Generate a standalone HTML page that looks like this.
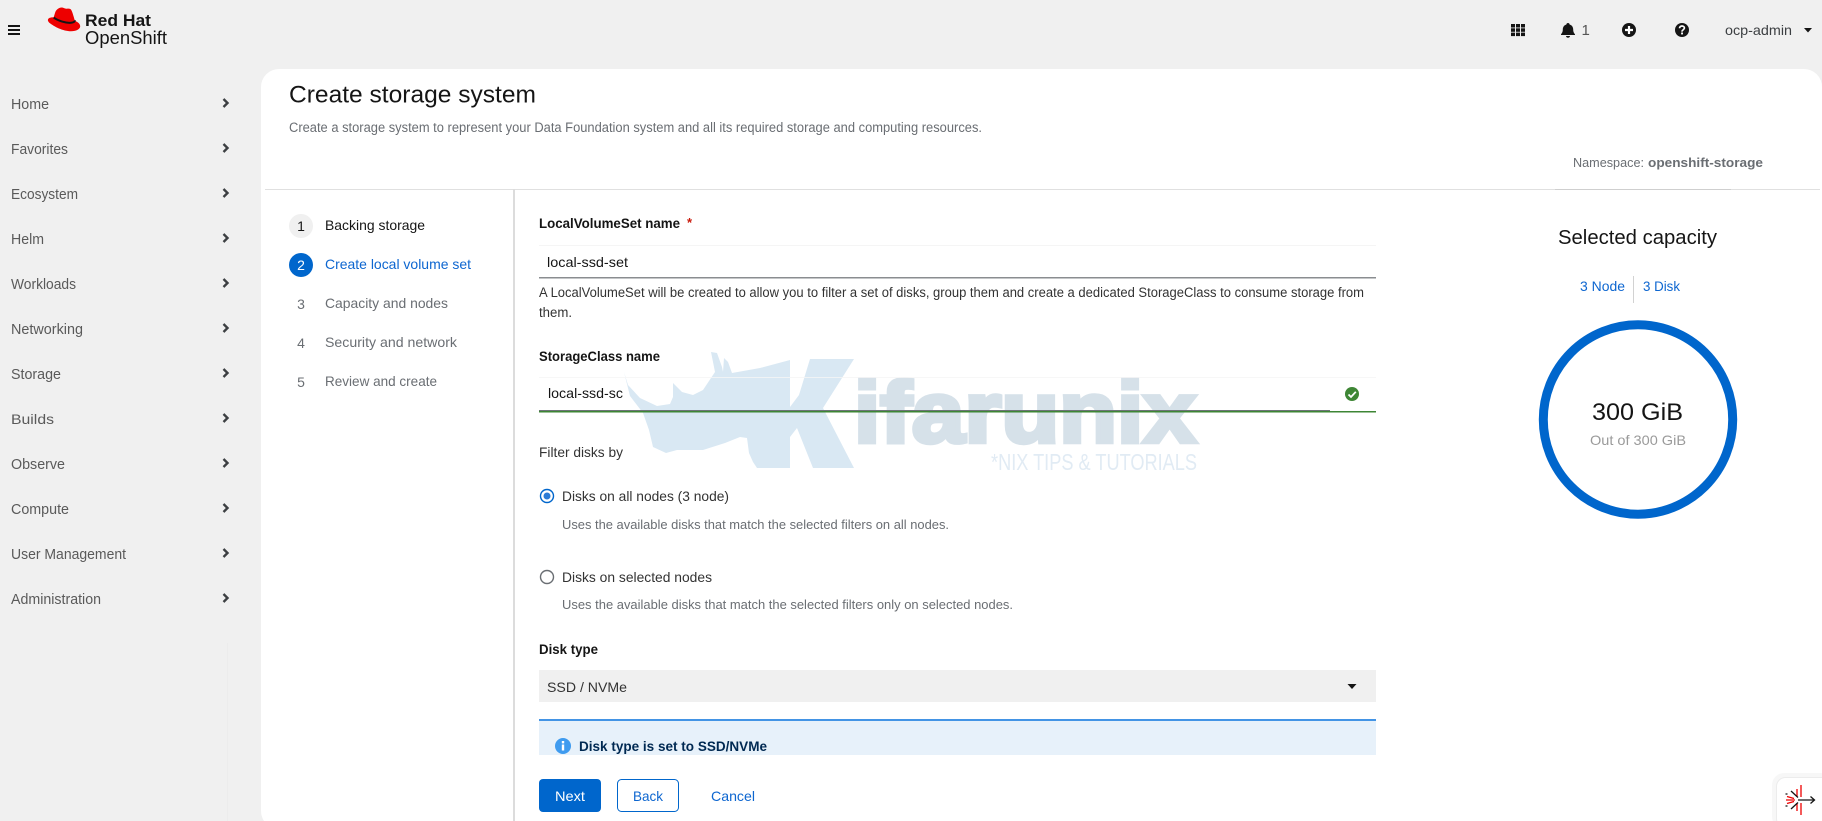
<!DOCTYPE html>
<html lang="en">
<head>
<meta charset="utf-8">
<title>Create storage system</title>
<style>
html,body{margin:0;padding:0;width:1822px;height:821px;overflow:hidden;background:#f0f0f0}
svg{display:block}
text{font-family:"Liberation Sans",sans-serif;font-size:14px;fill:#151515}
.nav text{fill:#5a5a5a;font-size:14.5px}
.mut{fill:#6a6e73}
.b{font-weight:700}
.lnk{fill:#0d66d0}
</style>
</head>
<body>
<svg width="1822" height="821" viewBox="0 0 1822 821" xmlns="http://www.w3.org/2000/svg">
<rect width="1822" height="821" fill="#f0f0f0"/>
<rect x="227" y="643" width="1" height="178" fill="#ececec"/>

<!-- Main panel -->
<rect x="261" y="69" width="1561" height="760" rx="18" fill="#fff"/>

<!-- Masthead -->
<g fill="#151515"><rect x="8" y="25" width="12" height="2"/><rect x="8" y="29" width="12" height="2"/><rect x="8" y="33" width="12" height="2"/></g>
<g>
<path d="M55 13C56 9.500 59 7.500 61.500 7.500C63.500 7.500 64.500 8.700 66.500 8.700C68.500 8.700 70.500 8.200 71.500 10.500C72.800 13 74 18 75 21C78 22 80.200 24 80.200 26.300C80.200 29.300 76 31.300 71 31.300C63 31.300 54 26.500 50 23.300C48 21.700 47.500 20.200 48.200 19C49 17.600 52 17.300 53.700 17.300Z" fill="#ee0000"/>
<path d="M53.700 17.600C58 20.800 66 23.300 71 22.800C73.500 22.500 75 21.700 74.800 20.300" fill="none" stroke="#151515" stroke-width="2"/>
</g>
<text x="85" y="26" class="b" textLength="66" lengthAdjust="spacingAndGlyphs" style="font-size:17px">Red Hat</text>
<text x="85" y="44" textLength="82" lengthAdjust="spacingAndGlyphs" style="font-size:18.500px">OpenShift</text>

<g fill="#151515">
<rect x="1511" y="24" width="4" height="3.500"/><rect x="1516" y="24" width="4" height="3.500"/><rect x="1521" y="24" width="4" height="3.500"/>
<rect x="1511" y="28.300" width="4" height="3.500"/><rect x="1516" y="28.300" width="4" height="3.500"/><rect x="1521" y="28.300" width="4" height="3.500"/>
<rect x="1511" y="32.600" width="4" height="3.500"/><rect x="1516" y="32.600" width="4" height="3.500"/><rect x="1521" y="32.600" width="4" height="3.500"/>
<path d="M1568 23C1569 23 1569.600 23.700 1569.600 24.500C1572 25.200 1573.200 27.200 1573.200 29.500C1573.200 32 1574 33 1575 34.300V35H1561V34.300C1562 33 1562.800 32 1562.800 29.500C1562.800 27.200 1564 25.200 1566.400 24.500C1566.400 23.700 1567 23 1568 23ZM1566 36H1570C1570 37 1569 37.800 1568 37.800C1567 37.800 1566 37 1566 36Z"/>
</g>
<text x="1581.500" y="35" style="font-size:15px;fill:#555">1</text>
<circle cx="1629" cy="30" r="7" fill="#151515"/>
<path d="M1629 26V34M1625 30H1633" stroke="#fff" stroke-width="2.200" fill="none"/>
<circle cx="1682" cy="30" r="7" fill="#151515"/>
<path d="M1679.600 28.200C1679.600 26.800 1680.700 26 1682 26C1683.400 26 1684.400 26.900 1684.400 28C1684.400 29.700 1682 29.800 1682 31.600" stroke="#fff" stroke-width="1.700" fill="none"/>
<rect x="1681.100" y="32.500" width="1.900" height="1.900" fill="#fff"/>
<text x="1725" y="35" textLength="67" lengthAdjust="spacingAndGlyphs" style="fill:#3c3f42">ocp-admin</text>
<path d="M1804 28H1812L1808 32.500Z" fill="#151515"/>

<!-- Sidebar -->
<g class="nav">
<text x="11" y="109" textLength="38" lengthAdjust="spacingAndGlyphs">Home</text>
<text x="11" y="154" textLength="57" lengthAdjust="spacingAndGlyphs">Favorites</text>
<text x="11" y="199" textLength="67" lengthAdjust="spacingAndGlyphs">Ecosystem</text>
<text x="11" y="244" textLength="33" lengthAdjust="spacingAndGlyphs">Helm</text>
<text x="11" y="289" textLength="65" lengthAdjust="spacingAndGlyphs">Workloads</text>
<text x="11" y="334" textLength="72" lengthAdjust="spacingAndGlyphs">Networking</text>
<text x="11" y="379" textLength="50" lengthAdjust="spacingAndGlyphs">Storage</text>
<text x="11" y="424" textLength="43" lengthAdjust="spacingAndGlyphs" style="font-size:14px">Builds</text>
<text x="11" y="469" textLength="54" lengthAdjust="spacingAndGlyphs">Observe</text>
<text x="11" y="514" textLength="58" lengthAdjust="spacingAndGlyphs">Compute</text>
<text x="11" y="559" textLength="115" lengthAdjust="spacingAndGlyphs">User Management</text>
<text x="11" y="604" textLength="90" lengthAdjust="spacingAndGlyphs">Administration</text>
</g>
<g fill="none" stroke="#3c3f42" stroke-width="2.400">
<path d="M223.500 99L227.500 103L223.500 107"/>
<path d="M223.500 144L227.500 148L223.500 152"/>
<path d="M223.500 189L227.500 193L223.500 197"/>
<path d="M223.500 234L227.500 238L223.500 242"/>
<path d="M223.500 279L227.500 283L223.500 287"/>
<path d="M223.500 324L227.500 328L223.500 332"/>
<path d="M223.500 369L227.500 373L223.500 377"/>
<path d="M223.500 414L227.500 418L223.500 422"/>
<path d="M223.500 459L227.500 463L223.500 467"/>
<path d="M223.500 504L227.500 508L223.500 512"/>
<path d="M223.500 549L227.500 553L223.500 557"/>
<path d="M223.500 594L227.500 598L223.500 602"/>
</g>

<!-- Watermark -->
<path d="M624 372L628 385L640 398L657 406L670 404L673 397L673 383L682 392L693 395L703 390L713 375L715 372L711 352L717 353L722 367L723 372L724 358L728 362L732 373L760 368L790 360L790 407L799 395L810 359L854 359L823 408L854 468L813 468L797 428L790 437L790 468L757 468L753 462L749 453L747 438L740 437L725 443L703 450L677 450L666 453L653 447L649 430L643 413L630 396Z" fill="#d9e8f3"/>
<text x="854" y="442" textLength="342" lengthAdjust="spacingAndGlyphs" class="b" style="font-size:86px;fill:#d6e1e9;stroke:#d6e1e9;stroke-width:4.500px">ifarunix</text>
<text x="991" y="470" textLength="206" lengthAdjust="spacingAndGlyphs" style="font-size:23px;fill:#e1ebf4">*NIX TIPS &amp; TUTORIALS</text>

<!-- Page header -->
<text x="289" y="102.500" textLength="247" lengthAdjust="spacingAndGlyphs" style="font-size:24px">Create storage system</text>
<text x="289" y="132" textLength="693" lengthAdjust="spacingAndGlyphs" class="mut" style="font-size:13.500px">Create a storage system to represent your Data Foundation system and all its required storage and computing resources.</text>
<text x="1573" y="167" textLength="71" lengthAdjust="spacingAndGlyphs" class="mut" style="font-size:13px">Namespace:</text>
<text x="1648" y="167" textLength="115" lengthAdjust="spacingAndGlyphs" class="mut b" style="font-size:13px">openshift-storage</text>
<rect x="265" y="189" width="1555" height="1" fill="#e0e0e0"/>
<rect x="1555" y="189" width="176" height="1" fill="#cfcfcf"/>
<rect x="513" y="189" width="2" height="632" fill="#dcdcdc"/>

<!-- Wizard steps -->
<circle cx="301" cy="226" r="12" fill="#f0f0f0"/>
<text x="301" y="231" text-anchor="middle" style="font-size:14px">1</text>
<text x="325" y="230" textLength="100" lengthAdjust="spacingAndGlyphs">Backing storage</text>
<circle cx="301" cy="265" r="12" fill="#0066cc"/>
<text x="301" y="270" text-anchor="middle" style="font-size:14px;fill:#fff">2</text>
<text x="325" y="269" textLength="146" lengthAdjust="spacingAndGlyphs" class="lnk">Create local volume set</text>
<text x="301" y="309" text-anchor="middle" class="mut">3</text>
<text x="325" y="308" textLength="123" lengthAdjust="spacingAndGlyphs" class="mut">Capacity and nodes</text>
<text x="301" y="348" text-anchor="middle" class="mut">4</text>
<text x="325" y="347" textLength="132" lengthAdjust="spacingAndGlyphs" class="mut">Security and network</text>
<text x="301" y="387" text-anchor="middle" class="mut">5</text>
<text x="325" y="386" textLength="112" lengthAdjust="spacingAndGlyphs" class="mut">Review and create</text>

<!-- Form -->
<text x="539" y="228" textLength="141" lengthAdjust="spacingAndGlyphs" class="b" style="font-size:13.500px">LocalVolumeSet name</text>
<text x="687" y="227" class="b" style="font-size:13px;fill:#c9190b">*</text>
<rect x="539" y="245" width="837" height="1" fill="#f5f5f5"/>
<text x="547" y="267" textLength="81" lengthAdjust="spacingAndGlyphs">local-ssd-set</text>
<rect x="539" y="277" width="837" height="1.500" fill="#8a8d90"/>
<text x="539" y="297" textLength="825" lengthAdjust="spacingAndGlyphs" style="font-size:13.500px;fill:#333">A LocalVolumeSet will be created to allow you to filter a set of disks, group them and create a dedicated StorageClass to consume storage from</text>
<text x="539" y="317" textLength="33" lengthAdjust="spacingAndGlyphs" style="font-size:13.500px;fill:#333">them.</text>

<text x="539" y="361" textLength="121" lengthAdjust="spacingAndGlyphs" class="b" style="font-size:13.500px">StorageClass name</text>
<rect x="539" y="377" width="837" height="1" fill="#f5f5f5" opacity=".8"/>
<text x="548" y="398" textLength="75" lengthAdjust="spacingAndGlyphs">local-ssd-sc</text>
<rect x="539" y="410" width="791" height="1" fill="#6e7378"/>
<rect x="539" y="411" width="837" height="1.500" fill="#3e8635"/>
<circle cx="1352" cy="394" r="7" fill="#3e8635"/>
<path d="M1348.500 394.500L1351 397L1355.800 391.800" fill="none" stroke="#fff" stroke-width="1.800"/>

<text x="539" y="457" textLength="84" lengthAdjust="spacingAndGlyphs" style="fill:#333">Filter disks by</text>

<circle cx="547" cy="496" r="6.500" fill="#fff" stroke="#0066cc" stroke-width="1.400"/>
<circle cx="547" cy="496" r="3.500" fill="#2b7bd6"/>
<text x="562" y="501" textLength="167" lengthAdjust="spacingAndGlyphs" style="fill:#333">Disks on all nodes (3 node)</text>
<text x="562" y="529" textLength="387" lengthAdjust="spacingAndGlyphs" class="mut" style="font-size:13px">Uses the available disks that match the selected filters on all nodes.</text>

<circle cx="547" cy="577" r="6.500" fill="#fff" stroke="#6a6e73" stroke-width="1.400"/>
<text x="562" y="582" textLength="150" lengthAdjust="spacingAndGlyphs" style="fill:#333">Disks on selected nodes</text>
<text x="562" y="609" textLength="451" lengthAdjust="spacingAndGlyphs" class="mut" style="font-size:13px">Uses the available disks that match the selected filters only on selected nodes.</text>

<text x="539" y="654" textLength="59" lengthAdjust="spacingAndGlyphs" class="b" style="font-size:13.500px">Disk type</text>
<rect x="539" y="670" width="837" height="32" fill="#f0f0f0"/>
<text x="547" y="692" textLength="80" lengthAdjust="spacingAndGlyphs" style="fill:#333">SSD / NVMe</text>
<path d="M1347.500 684H1356.500L1352 689Z" fill="#151515"/>

<rect x="539" y="721" width="837" height="34" fill="#e7f1fa"/>
<rect x="539" y="719" width="837" height="2" fill="#4394e5"/>
<circle cx="563" cy="746" r="8" fill="#3f9bef"/>
<rect x="561.800" y="741" width="2.400" height="2.400" fill="#fff"/>
<rect x="561.800" y="744.500" width="2.400" height="6" fill="#fff"/>
<text x="579" y="751" textLength="188" lengthAdjust="spacingAndGlyphs" class="b" style="font-size:13.500px;fill:#002952">Disk type is set to SSD/NVMe</text>

<rect x="539" y="779" width="62" height="33" rx="4" fill="#0066cc"/>
<text x="555" y="801" textLength="30" lengthAdjust="spacingAndGlyphs" style="fill:#fff">Next</text>
<rect x="617.500" y="779.500" width="61" height="32" rx="4" fill="#fff" stroke="#0066cc"/>
<text x="633" y="801" textLength="30" lengthAdjust="spacingAndGlyphs" class="lnk">Back</text>
<text x="711" y="801" textLength="44" lengthAdjust="spacingAndGlyphs" class="lnk">Cancel</text>

<!-- Capacity -->
<text x="1558" y="244" textLength="159" lengthAdjust="spacingAndGlyphs" style="font-size:20px">Selected capacity</text>
<text x="1580" y="291" textLength="45" lengthAdjust="spacingAndGlyphs" class="lnk">3 Node</text>
<rect x="1633" y="276" width="1" height="27" fill="#d2d2d2"/>
<text x="1643" y="291" textLength="37" lengthAdjust="spacingAndGlyphs" class="lnk">3 Disk</text>
<circle cx="1638" cy="419.500" r="94.700" fill="none" stroke="#0066cc" stroke-width="9"/>
<text x="1592" y="420" textLength="91" lengthAdjust="spacingAndGlyphs" style="font-size:24px">300 GiB</text>
<text x="1590" y="445" textLength="96" lengthAdjust="spacingAndGlyphs" style="fill:#9a9a9a">Out of 300 GiB</text>

<!-- Floating button -->
<rect x="1772" y="773" width="60" height="56" rx="12" fill="#000" opacity=".03"/>
<rect x="1776.500" y="777.500" width="60" height="50" rx="9" fill="#fff" stroke="#ececec"/>
<g fill="none" stroke-width="1.300">
<path d="M1801 785V797M1797 789V797M1786 800H1795M1787 796.500L1794 798.500M1787 803.500L1794 801.500M1801 803V815M1797 803V811" stroke="#ee0000"/>
<path d="M1791 791L1798 797.500M1791 809L1798 802.500M1785.500 794H1787.500M1785.500 806H1787.500" stroke="#151515"/>
<path d="M1798 800H1814M1810.500 796.500L1814.500 800L1810.500 803.500" stroke="#151515"/>
</g>
</svg>
</body>
</html>
